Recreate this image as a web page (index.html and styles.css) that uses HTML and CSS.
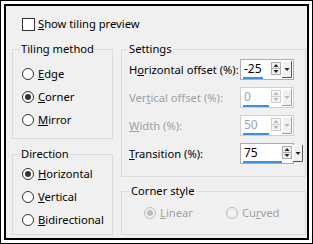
FILE: index.html
```html
<!DOCTYPE html>
<html lang="en">
<head>
    <meta charset="UTF-8">
    <title>Tiling</title>
    <link rel="stylesheet" href="styles.css">
</head>
<body>
    <div class="frame">
        <div class="dialog">
            <label class="check-row">
                <span class="checkbox"></span>
                <span><u>S</u>how tiling preview</span>
            </label>

            <div class="columns">
                <div class="col-left">
                    <fieldset class="group group-tiling">
                        <legend>Tiling method</legend>
                        <div class="radio-row"><span class="radio"></span><span><u>E</u>dge</span></div>
                        <div class="radio-row"><span class="radio checked"></span><span><u>C</u>orner</span></div>
                        <div class="radio-row"><span class="radio"></span><span><u>M</u>irror</span></div>
                    </fieldset>

                    <fieldset class="group group-direction">
                        <legend>Direction</legend>
                        <div class="radio-row"><span class="radio checked"></span><span><u>H</u>orizontal</span></div>
                        <div class="radio-row"><span class="radio"></span><span><u>V</u>ertical</span></div>
                        <div class="radio-row"><span class="radio"></span><span><u>B</u>idirectional</span></div>
                    </fieldset>
                </div>

                <div class="col-right">
                    <fieldset class="group group-settings">
                        <legend>Settings</legend>

                        <div class="field-row">
                            <span class="field-label">H<u>o</u>rizontal offset (%):</span>
                            <div class="spin">
                                <div class="spin-field">
                                    <span class="spin-value">-25</span>
                                    <span class="spin-bar" style="width: 20px"></span>
                                </div>
                                <svg class="spin-btns" width="22" height="18" viewBox="0 0 22 18">
                                    <rect x="0.5" y="1.5" width="9" height="12" fill="#f0f0f0" stroke="#adadad"/>
                                    <line x1="0.5" y1="7.5" x2="9.5" y2="7.5" stroke="#adadad"/>
                                    <polygon points="2.5,6 5,3 7.5,6" fill="#222"/>
                                    <polygon points="2.5,9 5,12 7.5,9" fill="#222"/>
                                    <rect x="11" y="0" width="10" height="17" fill="#f0f0f0"/>
                                    <path d="M11.5 17V0.5H21" stroke="#fff" fill="none"/>
                                    <path d="M11 16.5H20.5V0" stroke="#555" fill="none"/>
                                    <polygon points="13.5,7 16,10 18.5,7" fill="#222"/>
                                </svg>
                            </div>
                        </div>

                        <div class="field-row disabled">
                            <span class="field-label">Ver<u>t</u>ical offset (%):</span>
                            <div class="spin">
                                <div class="spin-field">
                                    <span class="spin-value">0</span>
                                    <span class="spin-bar" style="width: 26px"></span>
                                </div>
                                <svg class="spin-btns" width="22" height="18" viewBox="0 0 22 18">
                                    <rect x="0.5" y="1.5" width="9" height="12" fill="#f4f4f4" stroke="#cfcfcf"/>
                                    <line x1="0.5" y1="7.5" x2="9.5" y2="7.5" stroke="#cfcfcf"/>
                                    <polygon points="2.5,6 5,3 7.5,6" fill="#b5b5b5"/>
                                    <polygon points="2.5,9 5,12 7.5,9" fill="#b5b5b5"/>
                                    <rect x="11" y="0" width="10" height="17" fill="#f0f0f0"/>
                                    <path d="M11.5 17V0.5H21" stroke="#fff" fill="none"/>
                                    <path d="M11 16.5H20.5V0" stroke="#a0a0a0" fill="none"/>
                                    <polygon points="13.5,7 16,10 18.5,7" fill="#b5b5b5"/>
                                </svg>
                            </div>
                        </div>

                        <div class="field-row disabled">
                            <span class="field-label"><u>W</u>idth (%):</span>
                            <div class="spin">
                                <div class="spin-field">
                                    <span class="spin-value">50</span>
                                    <span class="spin-bar" style="width: 26px"></span>
                                </div>
                                <svg class="spin-btns" width="22" height="18" viewBox="0 0 22 18">
                                    <rect x="0.5" y="1.5" width="9" height="12" fill="#f4f4f4" stroke="#cfcfcf"/>
                                    <line x1="0.5" y1="7.5" x2="9.5" y2="7.5" stroke="#cfcfcf"/>
                                    <polygon points="2.5,6 5,3 7.5,6" fill="#b5b5b5"/>
                                    <polygon points="2.5,9 5,12 7.5,9" fill="#b5b5b5"/>
                                    <rect x="11" y="0" width="10" height="17" fill="#f0f0f0"/>
                                    <path d="M11.5 17V0.5H21" stroke="#fff" fill="none"/>
                                    <path d="M11 16.5H20.5V0" stroke="#a0a0a0" fill="none"/>
                                    <polygon points="13.5,7 16,10 18.5,7" fill="#b5b5b5"/>
                                </svg>
                            </div>
                        </div>

                        <div class="field-row">
                            <span class="field-label"><u>T</u>ransition (%):</span>
                            <div class="spin">
                                <div class="spin-field">
                                    <span class="spin-value">75</span>
                                    <span class="spin-bar" style="width: 39px"></span>
                                </div>
                                <svg class="spin-btns" width="22" height="18" viewBox="0 0 22 18">
                                    <rect x="0.5" y="1.5" width="9" height="12" fill="#f0f0f0" stroke="#adadad"/>
                                    <line x1="0.5" y1="7.5" x2="9.5" y2="7.5" stroke="#adadad"/>
                                    <polygon points="2.5,6 5,3 7.5,6" fill="#222"/>
                                    <polygon points="2.5,9 5,12 7.5,9" fill="#222"/>
                                    <rect x="11" y="0" width="10" height="17" fill="#f0f0f0"/>
                                    <path d="M11.5 17V0.5H21" stroke="#fff" fill="none"/>
                                    <path d="M11 16.5H20.5V0" stroke="#555" fill="none"/>
                                    <polygon points="13.5,7 16,10 18.5,7" fill="#222"/>
                                </svg>
                            </div>
                        </div>
                    </fieldset>

                    <fieldset class="group group-corner">
                        <legend>Corner style</legend>
                        <div class="corner-row">
                            <div class="radio-row disabled"><span class="radio checked"></span><span><u>L</u>inear</span></div>
                            <div class="radio-row disabled"><span class="radio"></span><span>Cu<u>r</u>ved</span></div>
                        </div>
                    </fieldset>
                </div>
            </div>
        </div>
    </div>
</body>
</html>
```

FILE: styles.css
```css
* {
    margin: 0;
    padding: 0;
    box-sizing: border-box;
}

body {
    background: #fff;
    font-family: 'Noto Sans', 'Liberation Sans', sans-serif;
    font-size: 11.2px;
    line-height: 16px;
    color: #000;
}

.frame {
    width: 313px;
    height: 244px;
    border: 1px solid #000;
    padding: 3px;
    background: #fff;
}

.dialog {
    height: 100%;
    border: 2px solid #000;
    background: #f0f0f0;
    padding: 10px 1px 3px 6px;
}

.check-row {
    display: flex;
    align-items: center;
    height: 16px;
    margin-left: 10px;
    gap: 3px;
}

.checkbox {
    width: 13px;
    height: 13px;
    border: 1px solid #333;
    background: #fff;
}

.columns {
    display: flex;
    gap: 8px;
    margin-top: 9px;
}

.col-left {
    width: 101px;
    display: flex;
    flex-direction: column;
    gap: 7px;
}

.col-right {
    width: 185px;
    display: flex;
    flex-direction: column;
    gap: 6px;
}

/* group boxes */
.group {
    border: 1px solid #dcdcdc;
    min-width: 0;
}

.group legend {
    padding: 0 1px;
    margin-left: -2px;
    line-height: 16px;
}

.group-tiling {
    padding: 5px 4px 7px 9px;
}

.group-direction {
    padding: 0 4px 3px 9px;
}

.group-settings {
    padding: 2px 0 12px 7px;
    display: flex;
    flex-direction: column;
    gap: 7px;
}

.group-settings legend {
    margin-left: -1px;
}

.group-corner {
    padding: 6px 4px 13px 22px;
}

.group-corner legend {
    margin-left: -14px;
}

/* radios */
.radio-row {
    display: flex;
    align-items: center;
    height: 23px;
    gap: 4px;
}

.radio {
    width: 12px;
    height: 12px;
    border: 1px solid #333;
    border-radius: 50%;
    background: #fff;
    display: flex;
    align-items: center;
    justify-content: center;
}

.radio.checked::after {
    content: '';
    width: 6px;
    height: 6px;
    border-radius: 50%;
    background: #333;
}

.corner-row {
    display: flex;
    gap: 33px;
}

.corner-row .radio-row {
    height: 16px;
}

.disabled {
    color: #a0a0a0;
}

.radio-row.disabled .radio {
    border-color: #bcbcbc;
    background: #f0f0f0;
}

.radio-row.disabled .radio.checked::after {
    background: #bcbcbc;
}

/* spin fields */
.field-row {
    display: flex;
    align-items: center;
    justify-content: space-between;
    height: 21px;
    padding-right: 11px;
}

.field-label {
    white-space: nowrap;
}

.spin {
    width: 54px;
    height: 21px;
    border: 1px solid #adadad;
    background: #fff;
    display: flex;
    align-items: flex-start;
    padding-top: 1px;
    flex-shrink: 0;
}

.field-row.disabled .spin {
    border-color: #cfcfcf;
}

.spin-field {
    flex: 1;
    display: flex;
    flex-direction: column;
    padding-left: 2px;
}

.spin-value {
    padding-left: 1px;
    line-height: 16px;
    font-size: 12px;
}

.field-row.disabled .spin-value {
    color: #9aa3b0;
}

.spin-bar {
    height: 2px;
    background: #3b8fe4;
}

.spin-btns {
    display: block;
    flex-shrink: 0;
}
```
